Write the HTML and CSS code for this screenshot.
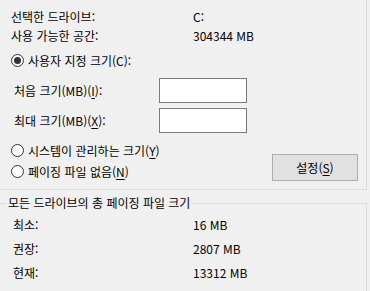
FILE: index.html
```html
<!DOCTYPE html>
<html lang="ko">
<head>
    <meta charset="UTF-8">
    <meta name="viewport" content="width=device-width, initial-scale=1.0">
    <title>가상 메모리</title>
    <link rel="stylesheet" href="styles.css">
</head>
<body>
    <div class="drive-box">
        <div class="info-row"><span>선택한 드라이브:</span><span>C:</span></div>
        <div class="info-row"><span>사용 가능한 공간:</span><span>304344 MB</span></div>

        <div class="option custom"><span class="radio checked"></span>사용자 지정 크기(C):</div>

        <div class="size-row first">
            <span>처음 크기(MB)(<u>I</u>):</span>
            <span class="field"></span>
        </div>
        <div class="size-row">
            <span>최대 크기(MB)(<u>X</u>):</span>
            <span class="field"></span>
        </div>

        <div class="bottom">
            <div class="options">
                <div class="option"><span class="radio"></span>시스템이 관리하는 크기(<u>Y</u>)</div>
                <div class="option"><span class="radio"></span>페이징 파일 없음(<u>N</u>)</div>
            </div>
            <button class="btn">설정(<u>S</u>)</button>
        </div>
    </div>

    <fieldset class="totals">
        <legend>모든 드라이브의 총 페이징 파일 크기</legend>
        <div class="total-row"><span>최소:</span><span>16 MB</span></div>
        <div class="total-row"><span>권장:</span><span>2807 MB</span></div>
        <div class="total-row"><span>현재:</span><span>13312 MB</span></div>
    </fieldset>
</body>
</html>
```

FILE: styles.css
```css
html, body {
    height: 100%;
    overflow: hidden;
}

body {
    margin: 0;
    background: #f0f0f0;
    font-family: "Noto Sans CJK KR", sans-serif;
    font-size: 12px;
    color: #000;
}

u {
    text-decoration-thickness: 1px;
    text-underline-offset: 2px;
}

/* grupo de arriba: solo se ven los bordes derecho e inferior */
.drive-box {
    box-sizing: border-box;
    width: 367px;
    height: 190px;
    padding-top: 7px;
    border-right: 1px solid #dcdcdc;
    border-bottom: 1px solid #dcdcdc;
}

.info-row {
    display: grid;
    grid-template-columns: 182px 1fr;
    padding-left: 11px;
    height: 19px;
    line-height: 19px;
}

.option {
    display: flex;
    align-items: center;
    height: 18px;
    padding-left: 11px;
    white-space: nowrap;
}

.option.custom {
    margin-top: 6px;
}

.radio {
    box-sizing: border-box;
    width: 13px;
    height: 13px;
    margin-right: 4px;
    border: 1px solid #333;
    border-radius: 50%;
    background: #fff;
    display: flex;
    align-items: center;
    justify-content: center;
}

.radio.checked::after {
    content: "";
    width: 7px;
    height: 7px;
    border-radius: 50%;
    background: #333;
}

.size-row {
    display: grid;
    grid-template-columns: 145px 88px;
    align-items: center;
    padding-left: 14px;
    margin-top: 5px;
}

.size-row.first {
    margin-top: 9px;
}

.field {
    box-sizing: border-box;
    height: 25px;
    border: 1px solid #7a7a7a;
    background: #fff;
}

.bottom {
    display: flex;
    justify-content: space-between;
    height: 40px;
    margin-top: 8px;
}

.options {
    display: flex;
    flex-direction: column;
    gap: 3px;
}

.btn {
    align-self: flex-end;
    box-sizing: border-box;
    width: 86px;
    height: 27px;
    margin-right: 8px;
    padding: 0;
    border: 1px solid #adadad;
    background: #e1e1e1;
    font-family: inherit;
    font-size: 12px;
    color: #000;
}

/* el borde de abajo queda fuera de la ventana */
.totals {
    box-sizing: border-box;
    margin: 5px 3px 0 -2px;
    padding: 2px 0 0;
    border: 1px solid #dcdcdc;
    height: 100px;
}

.totals legend {
    margin-left: 7px;
    padding: 0 2px;
    line-height: 16px;
}

.total-row {
    display: grid;
    grid-template-columns: 180px 1fr;
    padding-left: 14px;
    height: 24px;
    line-height: 24px;
}
```
